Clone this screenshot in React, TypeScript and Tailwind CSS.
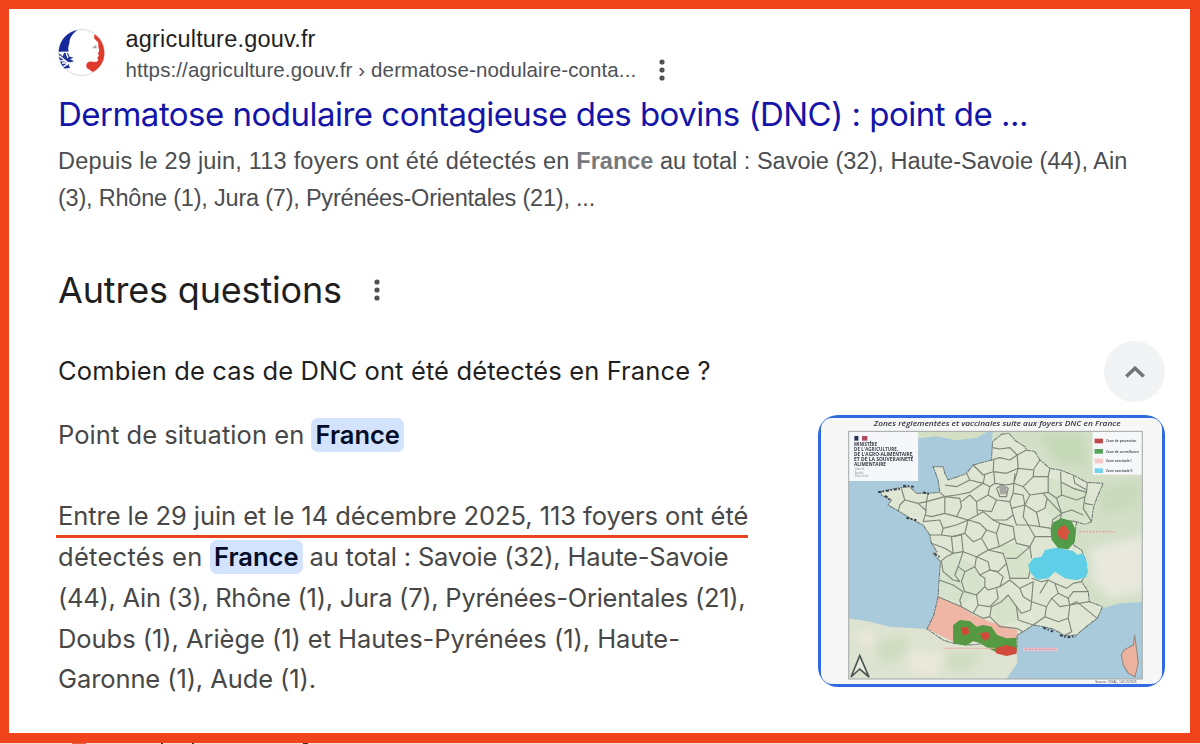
import React from 'react';

const borders = [
  'M548 128 570 132 600 128 622 150 650 135',
  'M545 165 570 158 600 165 622 150 625 190',
  'M490 180 520 210 550 200 552 165M550 200 590 205 625 190 670 195 690 165',
  'M552 200 555 235 590 240 612 235 615 205M625 190 612 235 640 245 670 215 672 195',
  'M470 205 480 225 520 235 525 210M405 240 440 245 480 225M390 262 405 275 440 270 480 262 520 235 540 245 555 235',
  'M670 215 715 215 720 190M715 215 715 262 660 270 640 245M715 262 740 280 755 270 752 200',
  'M755 232 790 250 830 262 832 232M755 270 800 285 825 275 830 262M790 210 795 235 830 255',
  'M825 275 820 310 845 350M825 295 850 300M740 280 755 325 785 315 820 330',
  'M540 245 535 270 560 285 600 290 610 265 612 235M560 250 575 240 595 250 590 275 570 275 560 250',
  'M610 265 640 270 645 300 605 310 600 290M660 270 645 300 680 322 705 310 712 280 700 265',
  'M680 322 690 365 725 370 728 345 755 325 712 280M755 325 750 345 800 350',
  'M275 250 285 285 325 295 350 290 355 265M285 285 270 300 265 320M350 290 348 325 340 350M325 295 350 318',
  'M350 290 405 275 405 325 365 335 345 330M405 275 450 280 455 305 440 335 405 325',
  'M455 290 480 270 500 290 503 330 475 345 440 335M500 290 535 270M503 330 520 320 550 345 590 345 610 330 605 310',
  'M503 315 545 320 560 285M340 350 390 345 400 370 395 390 360 390M400 370 440 360 475 345 465 385 430 395 395 390',
  'M365 415 405 430 430 445 425 395M425 395 455 390 460 440 430 445M465 385 490 410 515 400 530 375 510 355 475 345',
  'M530 375 560 385 570 355 550 345M560 385 568 425 535 435 515 400M570 355 610 365 615 400 568 425M610 330 620 360 655 360 690 365',
  'M645 300 640 335 655 360M655 360 675 395 660 425 620 415 615 400M675 395 725 395 725 370M460 440 500 455 535 435M500 455 495 485 465 500 445 485 460 440',
  'M392 470 410 455 430 445M445 485 435 510 450 530 430 525 400 500 395 470M500 455 535 470 540 495 510 510 495 485',
  'M535 435 580 445 590 475 565 500 540 495M590 460 620 460 660 425 665 460M590 475 600 520 655 520 665 480',
  'M465 500 455 530 465 560 500 570 525 545 525 520 510 510M540 495 560 500 580 515 570 545 535 555 525 545',
  'M388 525 430 540 460 560 450 585 455 605 385 575M455 605 490 625 505 600 500 570M505 600 540 605 565 580 560 550',
  'M570 545 600 525 630 550 640 575 665 590 662 615 635 625 620 605 595 570 575 590 545 605 540 635 570 665 620 670 640 680',
  'M620 605 625 645 670 660M630 550 670 530 665 590M665 590 710 605 725 580 745 565 735 535 715 525 690 565',
  'M665 520 695 530 715 525M735 535 770 550 790 535 815 530M745 565 775 580 790 560 835 560',
  'M725 580 750 605 780 600 775 580M710 605 705 635 670 660M705 635 745 650 775 640 780 600 838 590M775 640 785 680 762 692M780 600 800 590 862 640',
  'M490 625 520 640 540 635',
];

const France =
  'M575 88 597 85 618 108 645 125 650 135 675 140 690 165 720 190 750 195 790 210 830 232 880 235 862 275 850 310 845 350 825 358 800 350 795 385 790 420 815 435 825 460 832 500 815 530 835 560 838 590 878 605 862 640 835 660 800 690 765 692 730 672 700 665 670 660 640 680 622 690 620 740 590 750 560 740 530 715 480 720 430 715 400 705 352 672 372 630 385 575 388 520 392 470 370 445 382 440 365 415 360 390 340 360 310 345 270 320 235 300 245 285 215 270 215 260 260 250 300 245 320 265 355 265 390 262 385 225 370 185 400 185 405 205 415 225 445 215 470 205 490 180 545 165 548 110Z';

const legend = [
  { y: 108, fill: '#c04a4c', label: 'Zone de protection' },
  { y: 139, fill: '#55a257', label: 'Zone de surveillance' },
  { y: 168, fill: '#f5c9c6', label: 'Zone vaccinale I' },
  { y: 197, fill: '#73d3ea', label: 'Zone vaccinale II' },
];

function MapThumbnail() {
  return (
    <svg viewBox="25 30 1040 816" preserveAspectRatio="none" className="block h-full w-full">
      <defs>
        <filter id="soft" x="-5%" y="-5%" width="110%" height="110%">
          <feGaussianBlur stdDeviation="2.3" />
        </filter>
        <filter id="haze" x="-30%" y="-30%" width="160%" height="160%">
          <feGaussianBlur stdDeviation="12" />
        </filter>
        <clipPath id="frame">
          <rect x="117" y="79" width="880" height="743" />
        </clipPath>
      </defs>
      <rect x="0" y="0" width="1110" height="870" fill="#f7f7f8" />
      <g filter="url(#soft)">
        <g clipPath="url(#frame)">
          <rect x="117" y="79" width="880" height="743" fill="#a9cadb" />
          {/* neighbouring countries */}
          <path d="M548 79H1000V590L930 595 878 610 800 640 700 560 600 300 545 160Z" fill="#d3dfc7" />
          <path d="M325 79H535L500 98 440 106 380 94 325 100Z" fill="#d5dfc3" />
          <path d="M117 640 180 650 240 665 352 672 500 690 622 735 622 775 590 822H117Z" fill="#dee3d1" />
          <g filter="url(#haze)">
            <path d="M840 430 1000 390V560L900 580 850 530Z" fill="#e8e8de" />
            <path d="M870 250 990 230V300L880 330Z" fill="#c8dabb" />
            <path d="M690 90 820 85 830 190 740 170Z" fill="#c5d9b8" />
            <path d="M200 710 300 690 280 760 210 780ZM420 740 520 740 480 800 400 790Z" fill="#cfddc1" />
            <path d="M300 740 400 750 380 810 300 800ZM130 690 190 680 190 740Z" fill="#ebe8dc" />
          </g>
          <path d={France} fill="#dfe6d3" />
          <path d="M715 215 830 262 845 350 790 350 728 345 705 310ZM568 425 620 415 665 460 655 520 600 520 590 475ZM540 605 595 570 635 625 625 645 570 665Z" fill="#d6e2ca" />
          <path d="M430 445 495 485 510 510 525 545 500 570 455 600 390 570 392 480Z" fill="#d6e2cc" />
          <path d="M385 575 455 605 490 630 540 650 622 675 620 700 560 710 430 710 352 672 372 630Z" fill="#efb5a5" />
          <g fill="none" stroke="#7f867a" strokeWidth="3.4" strokeLinejoin="round">
            {borders.map((d) => (
              <path key={d} d={d} />
            ))}
          </g>
          <path d={France} fill="none" stroke="#6c7571" strokeWidth="3" strokeDasharray="14 2 6 2" />
          <path
            d="M205 262 250 254 272 252M280 242 312 245M226 272 240 284M290 338 320 346M340 262 362 268M374 446 390 456M700 668 730 680M750 690 770 697 798 694"
            fill="none"
            stroke="#37414b"
            strokeWidth="6"
            strokeDasharray="9 5 4 6"
          />
          <path d="M568 244 590 244 592 268 570 268Z" fill="#a6a7a2" />
          {/* vaccination and surveillance zones */}
          <path
            d="M655 480 670 460 695 455 705 435 740 428 790 438 802 450 820 445 832 475 830 515 800 526 765 520 735 500 715 520 680 524 660 500Z"
            fill="#5fcfe7"
          />
          <path d="M730 352 755 340 785 348 798 375 795 410 775 433 745 430 725 405 722 375Z" fill="#539a4c" />
          <path d="M748 368 765 360 778 380 770 405 750 400 742 385Z" fill="#d8533e" />
          <path
            d="M430 660 450 645 480 648 500 665 520 660 545 665 562 690 590 700 620 698 620 740 560 742 540 732 510 715 490 708 470 722 430 715Z"
            fill="#559943"
          />
          <path d="M452 668 475 665 478 685 460 692ZM510 685 535 680 540 698 522 708ZM560 728 590 720 620 728 620 746 590 753 558 745Z" fill="#d14a3b" />
          <path d="M400 730H555" stroke="#e9b1a8" strokeWidth="3" />
          <path d="M640 733H742" stroke="#ecc6cf" strokeWidth="10" />
          <path d="M645 733H738" stroke="#d58a96" strokeWidth="3" strokeDasharray="7 3" />
          <path d="M808 380H915" stroke="#dfaaa9" strokeWidth="5" strokeDasharray="6 4" />
          <path d="M974 690 980 735 985 775 975 815 955 805 940 780 934 750 942 735 970 720Z" fill="#edb29e" stroke="#90867c" strokeWidth="3" />
          {/* north arrow */}
          <path d="M150 752 178 816 150 792 124 816Z" fill="#e8eadf" stroke="#4e5752" strokeWidth="5" />
          <rect x="117" y="79" width="208" height="149" fill="#f6f7fa" />
          <rect x="848" y="79" width="150" height="130" fill="#f6f7f8" />
        </g>
        <rect x="117" y="79" width="880" height="743" fill="none" stroke="#a2a9a6" strokeWidth="3" />
        <rect x="134" y="93" width="12" height="14" fill="#2a2d55" />
        <rect x="157" y="93" width="16" height="14" fill="#ae4861" />
        <g fontFamily="Open Sans, sans-serif" fill="#33363f">
          <text x="192" y="63" fontSize="23" fontWeight="600" fontStyle="italic" textLength="740" lengthAdjust="spacingAndGlyphs">
            Zones réglementées et vaccinales suite aux foyers DNC en France
          </text>
          <g fontSize="13" fontWeight="700">
            <text x="133" y="124">MINISTÈRE</text>
            <text x="133" y="139" textLength="132">DE L'AGRICULTURE,</text>
            <text x="133" y="154" textLength="175" lengthAdjust="spacingAndGlyphs">DE L'AGRO-ALIMENTAIRE</text>
            <text x="133" y="168" textLength="178" lengthAdjust="spacingAndGlyphs">ET DE LA SOUVERAINETÉ</text>
            <text x="133" y="183" textLength="96" lengthAdjust="spacingAndGlyphs">ALIMENTAIRE</text>
          </g>
          <g fontSize="9" fill="#8b8e95">
            <text x="135" y="196">Liberté</text>
            <text x="135" y="206">Égalité</text>
            <text x="135" y="216">Fraternité</text>
          </g>
          {legend.map((item) => (
            <g key={item.label}>
              <rect x="854" y={item.y - 7} width="25" height="14" fill={item.fill} />
              <text x="888" y={item.y + 4} fontSize="10" fontWeight="600">
                {item.label}
              </text>
            </g>
          ))}
          <text x="856" y="835" fontSize="10">Source : DGAL, 14/12/2025</text>
        </g>
      </g>
    </svg>
  );
}

function SiteLogo() {
  return (
    <svg viewBox="26 26 140 140" className="size-[47px] shrink-0">
      <circle cx="96" cy="96" r="68.5" fill="#fff" stroke="#c9c9cf" strokeWidth="2" />
      <path d="M84 30C55 34 30 58 28 94L58 93C54 84 58 76 60 68 60 54 68 40 84 30Z" fill="#16299a" />
      <path d="M30 98 40 108 44 97 56 98 60 108 72 112 62 116 74 122 62 126 58 134 62 142 46 144C36 134 28 118 30 98Z" fill="#20349b" />
      <path d="M30 106 50 122 32 120M38 128 62 126 42 138M50 98 56 112" stroke="#fff" strokeWidth="4" fill="none" />
      <path
        d="M134 42C152 52 164 74 164 98 164 124 150 142 130 154L112 142C108 132 112 126 120 123L140 124 146 119 143 112 148 106 145 98 149 90 146 78 146 66 134 54Z"
        fill="#e03a2c"
      />
      <path d="M130 83 138 77 139 84" fill="none" stroke="#9d9da2" strokeWidth="4" />
    </svg>
  );
}

function Dots({ className }: { className: string }) {
  return (
    <svg viewBox="0 0 6 22" className={className} fill="currentColor">
      <circle cx="3" cy="3" r="2.6" />
      <circle cx="3" cy="11" r="2.6" />
      <circle cx="3" cy="19" r="2.6" />
    </svg>
  );
}

function Mark({ children }: { children: React.ReactNode }) {
  return (
    <mark className="rounded-[7px] bg-[#d3e3fd] px-[4px] pt-px pb-[2px] font-semibold tracking-[0px] text-[#040c28]">
      {children}
    </mark>
  );
}

export default function App() {
  return (
    <div className="h-[744px] w-[1200px] overflow-hidden bg-white font-['Inter',sans-serif] text-[#1f1f1f]">
      <div className="h-[743px] border-[9px] border-r-[10px] border-b-[10px] border-[#f0441c] pt-[15px] pr-[25px] pl-[49px] whitespace-nowrap">
        <div className="flex h-[67px] font-['Liberation_Sans',sans-serif]">
          <div className="pt-[5px]">
            <SiteLogo />
          </div>
          <div className="ml-[20.5px]">
            <div className="text-[23.5px] leading-[30px] tracking-[0.2px]">agriculture.gouv.fr</div>
            <div className="flex items-center text-[20.5px] leading-[31px] text-[#4d5156]">
              <span className="w-[533.5px] tracking-[0.11px]">https://agriculture.gouv.fr › dermatose-nodulaire-conta...</span>
              <Dots className="h-[22px] w-[6px] text-[#4d5156]" />
            </div>
          </div>
        </div>
        <h3 className="text-[33px] leading-[46px] tracking-[-0.51px] text-[#1414a8]">
          Dermatose nodulaire contagieuse des bovins (DNC) : point de ...
        </h3>
        <div className="mt-[6px] h-[123px] font-['Liberation_Sans',sans-serif] text-[23.5px] leading-[36.7px] text-[#4b4d50]">
          <div className="tracking-[0.02px]">
            <span className="tracking-[0.21px]">Depuis le 29 juin, 113 foyers ont été détectés en </span>
            <b className="text-[#777a7d]">France</b> au total : Savoie (32), Haute-Savoie (44), Ain
          </div>
          <div className="tracking-[-0.21px]">(3), Rhône (1), Jura (7), Pyrénées-Orientales (21), ...</div>
        </div>
        <div className="flex h-[48px] items-center">
          <h2 className="w-[316px] text-[36px] leading-[48px] tracking-[-0.17px]">Autres questions</h2>
          <Dots className="h-[22px] w-[6px] text-[#4d5156]" />
        </div>
        <div className="mt-[27px] flex h-[61px] items-center justify-between">
          <div className="pb-px text-[25.5px] leading-[40px] tracking-[0.13px]">Combien de cas de DNC ont été détectés en France ?</div>
          <div className="flex size-[61px] items-center justify-center rounded-full bg-[#f1f3f4] text-[#70757a]">
            <svg viewBox="0 0 20 12" className="h-[12px] w-[20px]" fill="none" stroke="currentColor" strokeWidth="3.6">
              <path d="M1.3 10.5 10 2.3l8.7 8.2" />
            </svg>
          </div>
        </div>
        <div className="mt-[12px] flex justify-between">
          <div className="relative pt-[0.6px] text-[25.5px] leading-[40.8px] text-[#474747]">
            <div className="h-[81.6px] tracking-[0.05px]">
              Point de situation en <Mark>France</Mark>
            </div>
            <div className="h-[40.8px] tracking-[-0.07px]">Entre le 29 juin et le 14 décembre 2025, 113 foyers ont été</div>
            <div className="h-[40.8px] tracking-[-0.2px]">
              <span className="tracking-[0.28px]">détectés en </span>
              <Mark>France</Mark> au total : Savoie (32), Haute-Savoie
            </div>
            <div className="h-[40.8px] tracking-[-0.26px]">(44), Ain (3), Rhône (1), Jura (7), Pyrénées-Orientales (21),</div>
            <div className="h-[40.8px] tracking-[-0.05px]">Doubs (1), Ariège (1) et Hautes-Pyrénées (1), Haute-</div>
            <div className="h-[40.8px] tracking-[-0.1px]">Garonne (1), Aude (1).</div>
            <div className="absolute top-[121px] left-[-2px] h-[3px] w-[692px] bg-[#e8451f]" />
          </div>
          <div className="relative mt-px h-[272px] w-[347px] overflow-hidden rounded-[20px]">
            <MapThumbnail />
            <div className="absolute inset-0 rounded-[14px] border-[3px] border-[#2f6bdf]" />
          </div>
        </div>
      </div>
      <div className="flex h-px bg-[#fbd9d0] pl-[72px]">
        <div className="w-[14px] bg-[#e8603f]" />
        <div className="ml-[75px] w-[2px] bg-[#5a2015]" />
        <div className="ml-[29px] w-[2px] bg-[#5a2015]" />
        <div className="ml-[109px] w-[5px] bg-[#5a2015]" />
      </div>
    </div>
  );
}
